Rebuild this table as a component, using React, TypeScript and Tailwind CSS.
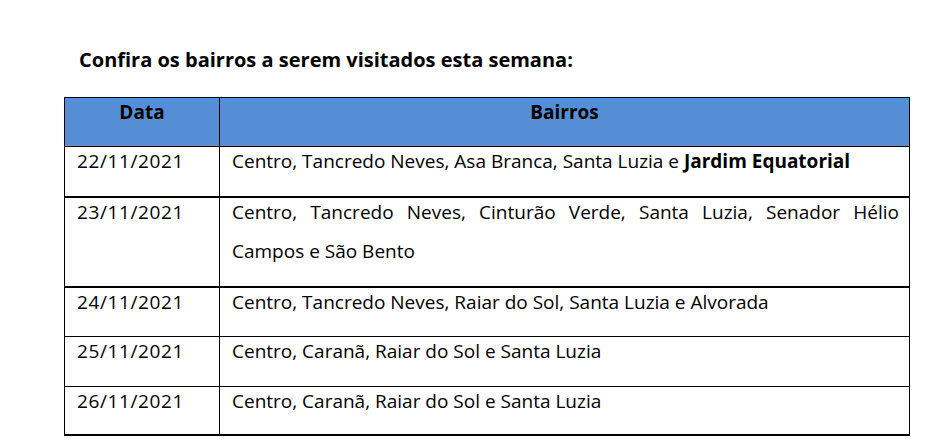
import React from "react";

const dateCls = "w-[155px] border-r border-black pl-[12px] leading-[24px] pt-[2px] tracking-[0.6px]";
const textCls = "flex-1 pl-[12px] pr-[10px] leading-[24px] pt-[2px] whitespace-nowrap";

export default function App() {
  return (
    <div className="w-[952px] h-[446px] bg-white relative overflow-hidden font-['Open_Sans',sans-serif] text-black">
      <div className="pt-[48px] pl-[79px] text-[20px] font-bold leading-[24px]">
        Confira os bairros a serem visitados esta semana:
      </div>
      <div className="mt-[25px] ml-[64px] w-[846px] border-l border-r border-black text-[19px]">
        {/* header */}
        <div className="flex h-[50px] border-t border-b border-black bg-[#558ed5] font-bold">
          <div className="w-[155px] border-r border-black text-center leading-[24px] pt-[2px]">Data</div>
          <div className="flex-1 text-center leading-[24px] pt-[2px]">Bairros</div>
        </div>
        {/* row 1 */}
        <div className="flex h-[51px] border-b-2 border-black">
          <div className={dateCls}>22/11/2021</div>
          <div className={textCls}>
            Centro, Tancredo Neves, Asa Branca, Santa Luzia e <span className="font-bold">Jardim Equatorial</span>
          </div>
        </div>
        {/* row 2 */}
        <div className="flex h-[90px] border-b-2 border-black">
          <div className={dateCls}>23/11/2021</div>
          <div className="flex-1 pl-[12px] pr-[10px] leading-[39px] mt-[-5px]">
            <div className="text-justify [text-align-last:justify] whitespace-nowrap">
              Centro, Tancredo Neves, Cinturão Verde, Santa Luzia, Senador Hélio
            </div>
            <div>Campos e São Bento</div>
          </div>
        </div>
        {/* row 3 */}
        <div className="flex h-[49px] border-b border-black">
          <div className={dateCls}>24/11/2021</div>
          <div className={textCls}>Centro, Tancredo Neves, Raiar do Sol, Santa Luzia e Alvorada</div>
        </div>
        {/* row 4 */}
        <div className="flex h-[50px] border-b border-black">
          <div className={dateCls}>25/11/2021</div>
          <div className={textCls}>Centro, Caranã, Raiar do Sol e Santa Luzia</div>
        </div>
        {/* row 5 */}
        <div className="flex h-[49px] border-b-2 border-black">
          <div className={dateCls}>26/11/2021</div>
          <div className={textCls}>Centro, Caranã, Raiar do Sol e Santa Luzia</div>
        </div>
      </div>
    </div>
  );
}
